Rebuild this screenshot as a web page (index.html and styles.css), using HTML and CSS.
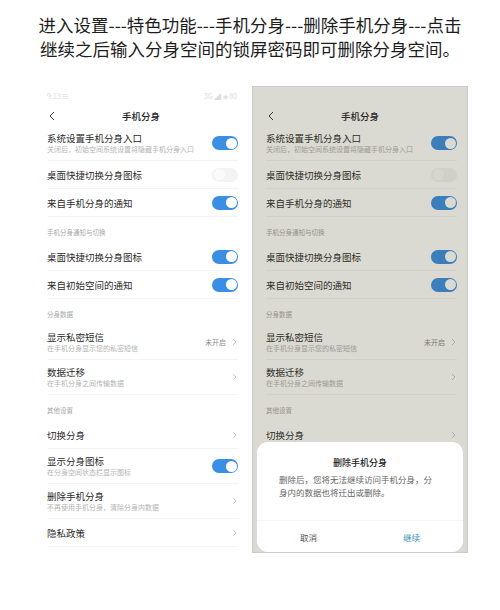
FILE: index.html
```html
<!DOCTYPE html>
<html lang="zh-CN">
<head>
    <meta charset="UTF-8">
    <meta name="viewport" content="width=device-width, initial-scale=1.0">
    <title>删除手机分身</title>
    <link rel="stylesheet" href="styles.css">
</head>
<body>
    <p class="intro">进入设置---特色功能---手机分身---删除手机分身---点击<br>继续之后输入分身空间的锁屏密码即可删除分身空间。</p>

    <div class="phones">
        <!-- 左边：设置页面 -->
        <div class="phone">
            <div class="status">
                <span>9:13 ☷</span>
                <span>3G ◢ ◈ 80</span>
            </div>
            <div class="title-bar">
                <svg class="back" width="6" height="10" viewBox="0 0 6 10"><polyline points="5,1 1,5 5,9" fill="none" stroke="#333" stroke-width="1"/></svg>
                <span>手机分身</span>
            </div>

            <div class="row two">
                <div class="text"><div class="name">系统设置手机分身入口</div><div class="sub">关闭后，初始空间系统设置将隐藏手机分身入口</div></div>
                <span class="switch on"></span>
            </div>
            <div class="row">
                <div class="text"><div class="name">桌面快捷切换分身图标</div></div>
                <span class="switch"></span>
            </div>
            <div class="row">
                <div class="text"><div class="name">来自手机分身的通知</div></div>
                <span class="switch on"></span>
            </div>

            <div class="section">手机分身通知与切换</div>
            <div class="row">
                <div class="text"><div class="name">桌面快捷切换分身图标</div></div>
                <span class="switch on"></span>
            </div>
            <div class="row">
                <div class="text"><div class="name">来自初始空间的通知</div></div>
                <span class="switch on"></span>
            </div>

            <div class="section">分身数据</div>
            <div class="row two">
                <div class="text"><div class="name">显示私密短信</div><div class="sub">在手机分身显示您的私密短信</div></div>
                <span class="value">未开启</span>
                <svg class="arrow" width="5" height="8" viewBox="0 0 5 8"><polyline points="1,1 4,4 1,7" fill="none" stroke="#c8c8c8" stroke-width="1"/></svg>
            </div>
            <div class="row two">
                <div class="text"><div class="name">数据迁移</div><div class="sub">在手机分身之间传输数据</div></div>
                <svg class="arrow" width="5" height="8" viewBox="0 0 5 8"><polyline points="1,1 4,4 1,7" fill="none" stroke="#c8c8c8" stroke-width="1"/></svg>
            </div>

            <div class="section">其他设置</div>
            <div class="row">
                <div class="text"><div class="name">切换分身</div></div>
                <svg class="arrow" width="5" height="8" viewBox="0 0 5 8"><polyline points="1,1 4,4 1,7" fill="none" stroke="#c8c8c8" stroke-width="1"/></svg>
            </div>
            <div class="row two">
                <div class="text"><div class="name">显示分身图标</div><div class="sub">在分身空间状态栏显示图标</div></div>
                <span class="switch on"></span>
            </div>
            <div class="row two">
                <div class="text"><div class="name">删除手机分身</div><div class="sub">不再使用手机分身，清除分身内数据</div></div>
                <svg class="arrow" width="5" height="8" viewBox="0 0 5 8"><polyline points="1,1 4,4 1,7" fill="none" stroke="#c8c8c8" stroke-width="1"/></svg>
            </div>
            <div class="row">
                <div class="text"><div class="name">隐私政策</div></div>
                <svg class="arrow" width="5" height="8" viewBox="0 0 5 8"><polyline points="1,1 4,4 1,7" fill="none" stroke="#c8c8c8" stroke-width="1"/></svg>
            </div>
        </div>

        <!-- 右边：点击删除后弹出的对话框 -->
        <div class="phone dim">
            <div class="status hidden">
                <span>9:13</span>
            </div>
            <div class="title-bar">
                <svg class="back" width="6" height="10" viewBox="0 0 6 10"><polyline points="5,1 1,5 5,9" fill="none" stroke="#333" stroke-width="1"/></svg>
                <span>手机分身</span>
            </div>

            <div class="row two">
                <div class="text"><div class="name">系统设置手机分身入口</div><div class="sub">关闭后，初始空间系统设置将隐藏手机分身入口</div></div>
                <span class="switch on"></span>
            </div>
            <div class="row">
                <div class="text"><div class="name">桌面快捷切换分身图标</div></div>
                <span class="switch"></span>
            </div>
            <div class="row">
                <div class="text"><div class="name">来自手机分身的通知</div></div>
                <span class="switch on"></span>
            </div>

            <div class="section">手机分身通知与切换</div>
            <div class="row">
                <div class="text"><div class="name">桌面快捷切换分身图标</div></div>
                <span class="switch on"></span>
            </div>
            <div class="row">
                <div class="text"><div class="name">来自初始空间的通知</div></div>
                <span class="switch on"></span>
            </div>

            <div class="section">分身数据</div>
            <div class="row two">
                <div class="text"><div class="name">显示私密短信</div><div class="sub">在手机分身显示您的私密短信</div></div>
                <span class="value">未开启</span>
                <svg class="arrow" width="5" height="8" viewBox="0 0 5 8"><polyline points="1,1 4,4 1,7" fill="none" stroke="#c8c8c8" stroke-width="1"/></svg>
            </div>
            <div class="row two">
                <div class="text"><div class="name">数据迁移</div><div class="sub">在手机分身之间传输数据</div></div>
                <svg class="arrow" width="5" height="8" viewBox="0 0 5 8"><polyline points="1,1 4,4 1,7" fill="none" stroke="#c8c8c8" stroke-width="1"/></svg>
            </div>

            <div class="section">其他设置</div>
            <div class="row">
                <div class="text"><div class="name">切换分身</div></div>
                <svg class="arrow" width="5" height="8" viewBox="0 0 5 8"><polyline points="1,1 4,4 1,7" fill="none" stroke="#c8c8c8" stroke-width="1"/></svg>
            </div>

            <div class="dialog">
                <div class="dialog-title">删除手机分身</div>
                <p class="dialog-text">删除后，您将无法继续访问手机分身，分身内的数据也将迁出或删除。</p>
                <div class="dialog-buttons">
                    <span>取消</span>
                    <span class="ok">继续</span>
                </div>
            </div>
        </div>
    </div>
</body>
</html>
```

FILE: styles.css
```css
body {
    margin: 0;
    font-family: "Noto Sans CJK SC", sans-serif;
    background-color: #fff;
    color: #222;
}

.intro {
    margin: 0;
    padding-top: 13px;
    font-size: 17.5px;
    line-height: 24px;
    text-align: center;
    color: #1e1e1e;
}

.phones {
    display: flex;
    gap: 3px;
    margin-top: 25px;
    padding-left: 33px;
}

.phone {
    position: relative;
    width: 216px;
    height: 467px;
    background-color: #fff;
    overflow: hidden;
}

/* capa gris encima del teléfono de la derecha */
.phone.dim::after {
    content: "";
    position: absolute;
    inset: 0;
    background-color: rgba(72, 66, 30, 0.2);
    box-shadow: inset 0 0 0 1px rgba(0, 0, 0, 0.06);
}

.status {
    height: 20px;
    display: flex;
    justify-content: space-between;
    align-items: center;
    padding: 0 12px 0 14px;
    font-size: 7px;
    color: #dcdcdc;
}

.status.hidden span {
    visibility: hidden;
}

.title-bar {
    position: relative;
    height: 20px;
    display: flex;
    align-items: center;
    justify-content: center;
    font-size: 9.5px;
    font-weight: 500;
    color: #222;
}

.title-bar .back {
    position: absolute;
    left: 16px;
    top: 5px;
}

.row {
    height: 28px;
    display: flex;
    align-items: center;
    margin: 0 11px 0 14px;
    border-bottom: 1px solid #f4f4f4;
    box-sizing: border-box;
}

.row.two {
    height: 35px;
}

.row .text {
    flex: 1;
}

.name {
    font-size: 9.5px;
    line-height: 12px;
    color: #2a2a2a;
}

.sub {
    font-size: 7px;
    line-height: 10px;
    color: #b4b4b4;
}

.value {
    font-size: 7px;
    color: #8c8c8c;
    margin-right: 6px;
}

.arrow {
    margin-right: 1px;
}

.section {
    height: 26px;
    display: flex;
    align-items: center;
    padding: 4px 0 0 14px;
    box-sizing: border-box;
    font-size: 6.5px;
    color: #a8a8a8;
}

.switch {
    position: relative;
    width: 26px;
    height: 14px;
    border-radius: 7px;
    background-color: #f3f3f3;
}

.switch::after {
    content: "";
    position: absolute;
    top: 1.5px;
    left: 1.5px;
    width: 11px;
    height: 11px;
    border-radius: 50%;
    background-color: #fafafa;
}

.switch.on {
    background-color: #3a8ee3;
}

.switch.on::after {
    left: 13.5px;
    background-color: #fff;
}

.dialog {
    position: absolute;
    left: 5px;
    right: 5px;
    bottom: 1px;
    height: 110px;
    z-index: 1;
    display: flex;
    flex-direction: column;
    background-color: #fff;
    border-radius: 11px;
}

.dialog-title {
    margin-top: 15px;
    text-align: center;
    font-size: 9px;
    line-height: 12px;
    font-weight: 500;
    color: #222;
}

.dialog-text {
    margin: 4px 0 0 22px;
    width: 155px;
    font-size: 8.5px;
    line-height: 13px;
    color: #666;
}

.dialog-buttons {
    margin-top: auto;
    height: 31px;
    display: flex;
    border-top: 1px solid #f5f5f5;
}

.dialog-buttons span {
    flex: 1;
    display: flex;
    align-items: center;
    justify-content: center;
    font-size: 8.5px;
    color: #555;
}

.dialog-buttons .ok {
    color: #3b8fb5;
}
```
